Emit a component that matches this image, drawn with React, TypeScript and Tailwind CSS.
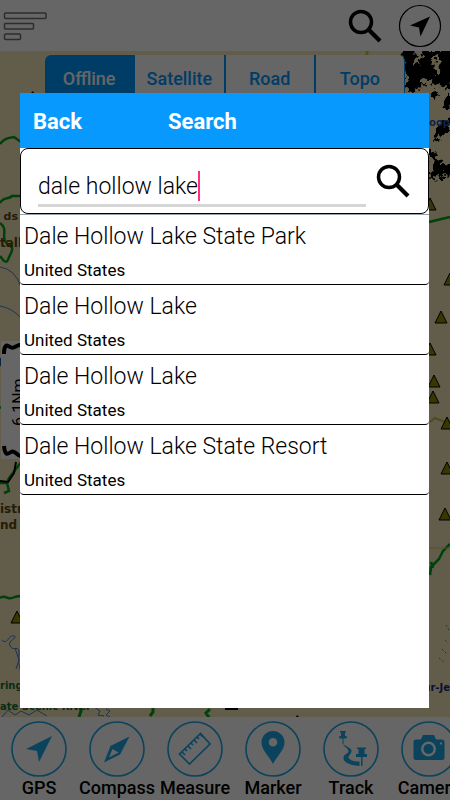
import { useState } from 'react'
import type { ReactNode } from 'react'

interface Place {
  id: number
  name: string
  country: string
}

const PLACES: Place[] = [
  { id: 1, name: 'Dale Hollow Lake State Park', country: 'United States' },
  { id: 2, name: 'Dale Hollow Lake', country: 'United States' },
  { id: 3, name: 'Dale Hollow Lake', country: 'United States' },
  { id: 4, name: 'Dale Hollow Lake State Resort', country: 'United States' },
]

const LAYERS = ['Offline', 'Satellite', 'Road', 'Topo']

// Camp / peak markers, tip of each triangle
const PEAKS = [
  [430, 198], [450, 273], [441, 311], [430, 343], [434, 375], [433, 391],
  [447, 417], [447, 462], [445, 508], [17, 611],
]

const TOOLS: { label: string; icon: ReactNode }[] = [
  {
    label: 'GPS',
    icon: <path d="M41 15 15 28l11 2 2 11z" fill="currentColor" />,
  },
  {
    label: 'Compass',
    icon: (
      <path
        d="M40.500 15.500 21.500 25 15 41.500l16-8zM23.500 28l6 3.500-9.500 5z"
        fill="currentColor"
        fillRule="evenodd"
      />
    ),
  },
  {
    label: 'Measure',
    icon: (
      <g fill="none" stroke="currentColor" strokeWidth="1.700">
        <path d="M12.500 33 33.500 12.500 43 23 22.500 43z" />
        <path d="m15 31 3 3m0-6 2 2m1-5 3 3m0-6 2 2m1-5 3 3m0-6 2 2m1-5 3 3" />
      </g>
    ),
  },
  {
    label: 'Marker',
    icon: (
      <path
        d="M28 43C24 35 16.500 29 16.500 21.500a11.500 11.500 0 0 1 23 0C39.500 29 32 35 28 43zm0-26a4.300 4.300 0 1 0 0 8.600 4.300 4.300 0 0 0 0-8.600z"
        fill="currentColor"
        fillRule="evenodd"
      />
    ),
  },
  {
    label: 'Track',
    icon: (
      <g fill="currentColor">
        <path d="M17 10h6v1.500h-1v3.500h1.700v2.500h-7.400V15H18v-3.500h-1zM19.500 17.500h1V23h-1z" />
        <path d="M34 26.500h9V28h-1.500v5h2.500v3H33v-3h2.500v-5H34zM38 36h1.500v9H38z" />
        <path d="M20 23c4 3 9 4 8.500 7.500S24 35 26 37.500s6 3 10.500 3V45c-8-.5-15.500-3-16-7.500s5.500-4.500 5-7.500-3.500-3.500-5.500-7z" />
      </g>
    ),
  },
  {
    label: 'Camera',
    icon: (
      <path
        d="M22 14h11l2 4.500h6a2.500 2.500 0 0 1 2.500 2.500v15.500A2.500 2.500 0 0 1 41 39H15a2.500 2.500 0 0 1-2.500-2.500V21a2.500 2.500 0 0 1 2.500-2.500h5zm5.500 6.500a7.500 7.500 0 1 0 0 15 7.500 7.500 0 0 0 0-15zm0 2.500a5 5 0 1 1 0 10 5 5 0 0 1 0-10zM39 21.500v2h2v-2z"
        fill="currentColor"
        fillRule="evenodd"
      />
    ),
  },
]

function SearchIcon() {
  return (
    <svg viewBox="0 0 34 34" className="size-[34px]" fill="none" stroke="black">
      <circle cx="13" cy="13" r="10.500" strokeWidth="3.500" />
      <path d="m21 21 11 11" strokeWidth="4.200" />
    </svg>
  )
}

function MapCanvas() {
  return (
    <svg
      viewBox="0 51 450 666"
      preserveAspectRatio="xMidYMin slice"
      className="absolute inset-0 size-full bg-[#f4e6bb]"
      fontFamily="DejaVu Sans"
      fontWeight="bold"
      aria-hidden="true"
    >
      <defs>
        <filter id="shore" x="-20%" y="-20%" width="140%" height="140%">
          <feTurbulence type="fractalNoise" baseFrequency="0.2" numOctaves="2" seed="4" />
          <feDisplacementMap in="SourceGraphic" scale="14" xChannelSelector="R" yChannelSelector="G" />
        </filter>
      </defs>

      <g filter="url(#shore)">
        <path d="M402 48h13l5 8 8-6h30v34l-6-4-5 12-6-8-8 1-5-5-6 9-14 2z" />
        <path d="M417 48v16m19-8 2 18m-16 4 8 6" stroke="#f4e6bb" strokeWidth="5" />
        <path
          d="m432 92 5 6m14-2-6 12m8 10-12 9-5 14m9-16v8M428 148l8 14 18 14m-18-16-3 20m10-14 12 2m-20-8 8 18"
          fill="none"
          stroke="black"
          strokeWidth="6"
        />
      </g>

      <g fill="none" stroke="#00a01c" strokeWidth="2.500">
        <path d="M0 144c4-6 9-6 14-7l7 5" />
        <path d="M0 203c4-7 8-3 12-7l10 0M0 223c8 6 2 12 5 18s10 4 6 12-3 10-7 8l-4-5" />
        <path d="m429 222 21-5M0 598c5-4 8 2 12 0s5-2 9-2" />
        <path d="m450 544-7 7-4 8-8 8-1 8m1-13 2 6" />
        <path d="m22 461-13 17-2 5-7 0m7 0 2 8-5 2" />
        <path d="m80 707 1 4-2 6M153 707l0 5-3 4M210 709l-4 4 4 6" strokeWidth="3" />
        <path d="m0 407 2 1" />
      </g>
      <path d="M367 51v5" stroke="#a8e020" strokeWidth="3" />
      <path d="m429 548 21 0" stroke="#d8c860" />
      <path d="m430 422 5-4 15 6" stroke="#b8c040" strokeWidth="2" fill="none" />

      <g fill="none" stroke="#4a7fc8" strokeWidth="1">
        <path d="M0 267q15 2 21 20M0 306q12 2 21 12M2 640c5 6 7-6 12-4s-7 4-4 10 10-2 9 8 1 14 2 20M15 648l4 12-3 9" />
        <path d="m2 717 6-7 7 5 6-4 8 4 8-5 10 6M94 707l6 4-2 4 6 1M106 709l4 2-4 4 4 2" />
        <path d="m446 625 3 5m-4 10 3 3m-6 6 5 5m-8 4 6 5" strokeDasharray="2 2" />
      </g>
      <path d="M16 462 14 473l-6 9-8-1" fill="none" stroke="black" strokeWidth="2" />
      <path d="M0 358h3v8H0z" fill="#2456b0" />

      <rect x="1" y="341" width="60" height="118" fill="white" />
      <path d="M4 354c0-8 2-10 6-7s8-4 12-2M4 446c1 9 3 9 7 6s7 6 11 4" fill="none" stroke="black" strokeWidth="4" />
      <text transform="translate(24 426) rotate(-90)" fontSize="16" fontWeight="normal" fontFamily="Roboto">
        6.1Nm
      </text>

      {PEAKS.map(([x, y]) => (
        <path key={`${x}-${y}`} d={`M${x} ${y}l6 12h-12z`} fill="#8a8a00" stroke="black" strokeLinejoin="round" />
      ))}

      <g fontSize="12" fill="#5a4a10">
        <text x="18" y="220" textAnchor="end" fontSize="11">ds</text>
        <text x="0" y="247">tall</text>
        <text x="0" y="513">istrict</text>
        <text x="0" y="529">nd (</text>
      </g>
      <g fontSize="10" fill="#157030">
        <text x="0" y="689">ring</text>
        <text x="0" y="710">ate Scenic River</text>
      </g>
      <g fontSize="10" textAnchor="end">
        <text x="450" y="126" fill="#2858a8">oop</text>
        <text x="450" y="691" fill="#102c80">ur-Je</text>
      </g>
      <path d="M225 708h13v2h-13zM296 717l1-2 2 2zM31 93l2-2 1 2z" />
    </svg>
  )
}

export default function App() {
  const [query, setQuery] = useState('dale hollow lake')

  return (
    <div className="flex h-screen flex-col overflow-hidden bg-white font-[Roboto,sans-serif] text-black">
      <header className="flex h-[51px] shrink-0 items-center justify-between pl-[3px] pr-2">
        <button type="button" aria-label="Menu">
          <svg viewBox="0 0 45 30" className="h-[30px] w-[45px]" fill="none" stroke="#707070" strokeWidth="1.500">
            <rect x="1.500" y="2" width="41.500" height="5.500" rx="1" />
            <rect x="1.500" y="12.500" width="29" height="5.500" rx="1" />
            <rect x="1.500" y="23" width="16" height="5.500" rx="1" />
          </svg>
        </button>
        <div className="flex items-center gap-4">
          <button type="button" aria-label="Search">
            <SearchIcon />
          </button>
          <button type="button" aria-label="My location">
            <svg viewBox="0 0 44 44" className="size-11">
              <circle cx="22" cy="22" r="20.500" fill="none" stroke="black" strokeWidth="1.200" />
              <path d="M32 12.500 12 21.500l9 2 1.500 9z" />
            </svg>
          </button>
        </div>
      </header>

      <main className="relative flex-1 overflow-hidden">
        <MapCanvas />
        <div className="relative mx-[45px] mt-1 flex h-12 divide-x-2 divide-[#0099ff] overflow-hidden rounded-t-md border-r border-[#0099ff] bg-white">
          {LAYERS.map((layer) => (
            <button
              key={layer}
              type="button"
              className={`flex-1 basis-0 text-lg font-medium ${layer === 'Offline' ? 'bg-[#0099ff] text-white' : 'text-[#0099ff]'}`}
            >
              {layer}
            </button>
          ))}
        </div>
      </main>

      <nav className="flex h-[83px] shrink-0 overflow-hidden pt-1">
        {TOOLS.map((tool) => (
          <button key={tool.label} type="button" className="flex w-[78px] shrink-0 flex-col items-center">
            <svg viewBox="0 0 56 56" className="size-14 text-[#1ca6e6]">
              <circle cx="28" cy="28" r="27" fill="none" stroke="currentColor" strokeWidth="1.600" />
              {tool.icon}
            </svg>
            <span className="text-lg leading-[22px] font-medium whitespace-nowrap">{tool.label}</span>
          </button>
        ))}
      </nav>

      <div className="fixed inset-0 flex bg-black/60 pt-[93px] pr-[21px] pb-[92px] pl-5">
        <section role="dialog" aria-label="Search" className="flex flex-1 flex-col bg-white">
          <div className="flex h-[55px] shrink-0 items-center gap-[86px] bg-[#0899ff] px-[13px] pt-[2px] text-[22px] font-bold text-white">
            <button type="button">Back</button>
            <h1>Search</h1>
          </div>

          <form
            className="flex h-[66px] shrink-0 items-center gap-[10px] rounded-lg border border-black pr-[18px] pl-[17px]"
            onSubmit={(e) => e.preventDefault()}
          >
            <label className="mt-2 flex h-11 flex-1 items-center border-b-3 border-[#d6d6d6] pt-1">
              <input
                type="text"
                aria-label="Place name"
                value={query}
                onChange={(e) => setQuery(e.target.value)}
                className="field-sizing-content pt-1 text-[23px] font-light caret-transparent outline-none"
              />
              <span className="h-[30px] w-[2px] bg-[#ff2f7e]" />
            </label>
            <button type="submit" aria-label="Search places">
              <SearchIcon />
            </button>
          </form>

          <ul className="border-t border-gray-400">
            {PLACES.map((place) => (
              <li key={place.id} className="h-[70px] rounded-b-sm border-b border-black px-1 pt-2">
                <p className="text-[23px] leading-7 font-light">{place.name}</p>
                <p className="mt-2 text-[17px] leading-[22px]">{place.country}</p>
              </li>
            ))}
          </ul>
        </section>
      </div>
    </div>
  )
}
